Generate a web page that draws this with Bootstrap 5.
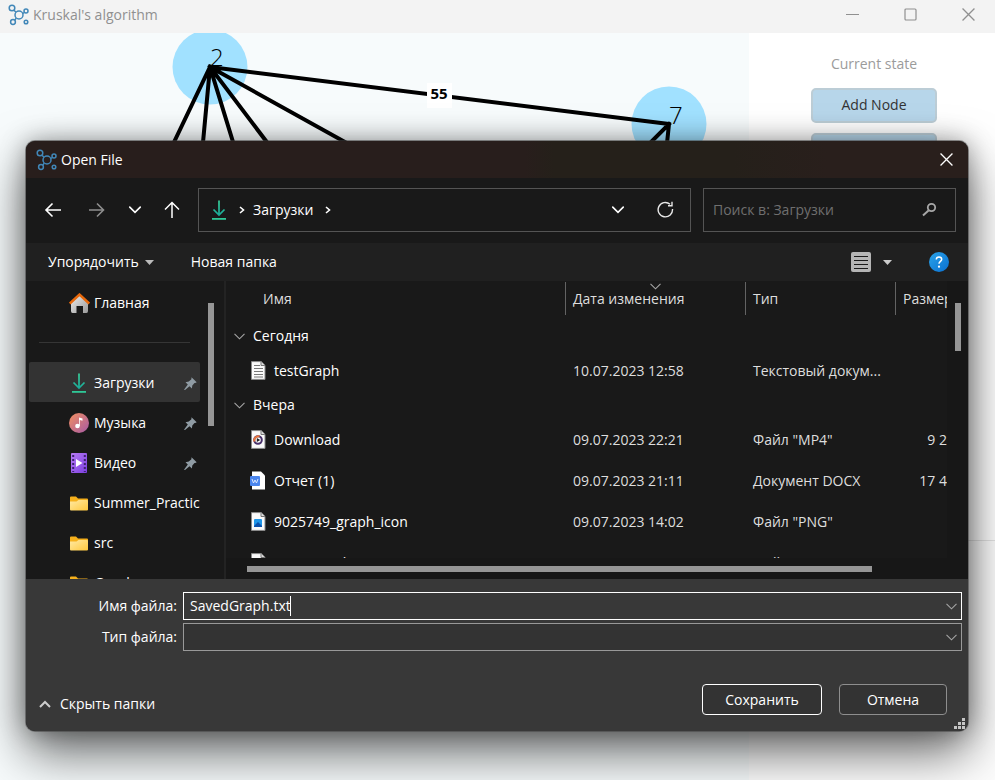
<!DOCTYPE html>
<html lang="ru">
<head>
<meta charset="utf-8">
<meta name="viewport" content="width=device-width, initial-scale=1">
<title>Kruskal's algorithm</title>
<link href="https://cdn.jsdelivr.net/npm/bootstrap@5.3.0/dist/css/bootstrap.min.css" rel="stylesheet">
<style>
  body { font-family: "Open Sans", "Noto Sans", sans-serif; font-size: 14px; line-height: 20px; background: #f7fbfc; }
  svg { display: block; flex: none; }
  button { color: inherit; }
  .plain { background: none; border: 0; padding: 0; }
  .app-bar { height: 33px; background: #f3f3f3; color: #909090; padding: 0 20px 4px 7px; }
  .win-controls { gap: 45px; }
  .board { background: #f7fbfc; }
  .side-panel { width: 246px; }
  .panel-top { flex: 0 0 508px; background: #fff; border-bottom: 1px solid #e4e4e4; padding: 21px 0 0 4px; }
  .panel-rest { background: #fdfdfd; }
  .state-label { color: #9b9b9b; margin-bottom: 14px; }
  .act { width: 126px; height: 35px; border: 2px solid #bccdd6; border-radius: 5px; background: #b7d6ea; color: #333; padding: 0 0 2px; margin-bottom: 10px; }
  .node-name { font-size: 24px; font-weight: 300; }
  .edge-cost { font-size: 15px; font-weight: 700; }

  .dialog-win { position: absolute; inset: 141px 27px 49px 26px; background: #191919; color: #fff; border-radius: 9px;
    box-shadow: 0 0 0 1px rgba(70,70,70,.55), 0 0 24px rgba(0,0,0,.34), 0 22px 50px rgba(0,0,0,.58); }
  .dialog-title { height: 37px; padding: 0 15px 0 9px; background: linear-gradient(90deg, #281e1c 53%, #25201a 56%, #25201a 75%, #291f1c 85%); border-radius: 9px 9px 0 0; }
  .nav-row { height: 65px; padding: 10px 12px 12px 18px; }
  .gap-before-wide { margin-left: 26px; }
  .gap-before { margin-left: 22px; }
  .path-box { margin-left: 18px; }
  .bar-box { border: 1px solid #545454; height: 44px; }
  .find-box { width: 253px; flex: none; padding: 0 18px 0 9px; }
  .find-box input { background: none; border: 0; outline: 0; color: #fff; padding: 0; min-width: 0; }
  .find-box input::placeholder { color: #6f6f6f; opacity: 1; }
  .tool-row { height: 38px; background: #202020; padding: 0 19px 0 22px; }
  .tool-gap { margin-left: 6px; }
  .tool-next { margin-left: 37px; }
  .content-row { min-height: 0; }
  .list-side { min-width: 0; }
  .tree { width: 171px; margin-left: 3px; padding-top: 1px; overflow: hidden; }
  .tree-item { height: 40px; flex: none; padding: 2px 3px 0 40px; border-radius: 2px; white-space: nowrap; color: #fff; text-decoration: none; }
  .tree-item.is-current { background: #333; }
  .tree-rule { height: 40px; flex: none; padding: 20px 10px 0; }
  .tree-rule hr { margin: 0; border-color: #8a8a8a; }
  .vtrack { padding-top: 22px; }
  .thumb { background: #969696; }
  .tree-track { width: 26px; padding-left: 8px; border-right: 2px solid #232323; }
  .tree-track .thumb { width: 6px; height: 123px; }
  .list-track { width: 21px; padding-left: 8px; background: #171717; }
  .list-track .thumb { width: 6px; height: 48px; }
  .htrack { height: 21px; padding: 8px 75px 0 21px; background: #171717; }
  .htrack .thumb { height: 6px; }
  .files { table-layout: fixed; width: 100%; border-collapse: collapse; }
  .files th, .files td { padding: 0; font-weight: 400; overflow: hidden; white-space: nowrap; }
  .files th { height: 41px; vertical-align: top; color: #dedede; }
  .files tbody td { height: 41px; color: #dedede; padding-left: 8px; padding-top: 1px; }
  .files tbody .file-name { color: #fff; padding-left: 24px; }
  .files tbody .group-name { height: 28px; color: #fff; padding-top: 0; }
  .head-cell { height: 33px; margin-top: 1px; padding: 7px 0 0 7px; border-left: 1px solid #636363; }
  .head-first { border: 0; padding-left: 37px; }
  .sort-mark { position: absolute; left: 84px; top: 1px; }
  .col-date { width: 180px; } .col-kind { width: 150px; } .col-size { width: 52px; }
  .dialog-foot { height: 152px; background: #383838; border-radius: 0 0 9px 9px; padding: 13px 6px 0 13px; }
  .field-label { width: 138px; text-align: right; margin-right: 6px; }
  .field { height: 28px; border: 1px solid #999; background: #333; padding: 0 4px 0 6px; }
  .field.is-active { border-color: #fff; background: #383838; }
  .field-row { margin-bottom: 3px; }
  .field input { width: 100px; border: 0; padding: 0; background: none; color: #fff; outline: 0; }
  .field select { border: 0; appearance: none; background: none; outline: 0; color: #fff; }
  .caret-bar { width: 1px; height: 20px; background: #fff; }
  .foot-actions { margin-top: 33px; padding-right: 15px; gap: 17px; }
  .foot-toggle { gap: 9px; padding-top: 8px; }
  .dlg-btn { height: 31px; border: 1px solid #8e8e8e; border-radius: 4px; background: #333; width: 108px; padding: 0; }
  .dlg-btn.primary-act { border-color: #fff; width: 120px; }
  .grip { position: absolute; right: 3px; bottom: 2px; }
</style>
<script src="https://cdn.jsdelivr.net/npm/bootstrap@5.3.0/dist/js/bootstrap.bundle.min.js"></script>
</head>
<body>
<svg width="0" height="0" class="position-absolute" aria-hidden="true">
  <defs>
    <symbol id="graph" viewBox="0 0 22 22"><g fill="none" stroke="#4187b8" stroke-width="1.500"><circle cx="12" cy="11" r="4"/><circle cx="5" cy="4" r="2.800"/><circle cx="19" cy="7" r="2"/><circle cx="6" cy="18" r="2.400"/><circle cx="19" cy="18" r="1.800"/><path d="M7 6.200l2 2M15.800 9.500l1.500-1M7.800 16l1.400-1.700"/></g></symbol>
    <symbol id="cross" viewBox="0 0 12 12"><path d="M.5.5l11 11M11.500.5l-11 11" stroke="currentColor" stroke-width="1.200"/></symbol>
    <symbol id="down" viewBox="0 0 12 8"><path d="M1.500 1.500L6 6l4.500-4.500" fill="none" stroke="currentColor" stroke-width="1.400" stroke-linecap="round"/></symbol>
    <symbol id="thin-down" viewBox="0 0 11 7"><path d="M.5.800l5 5 5-5" fill="none" stroke="#a5a5a5" stroke-width="1.100"/></symbol>
    <symbol id="step" viewBox="0 0 6 8"><path d="M1 1l3.500 3L1 7" fill="none" stroke="#fff" stroke-width="1.600"/></symbol>
    <symbol id="load" viewBox="0 0 16 20"><g fill="none" stroke="url(#teal)" stroke-width="1.700"><path d="M8 .5v14M2.500 9.500L8 15l5.500-5.500"/></g><path d="M1 18h14v1.800H1z" fill="#2fc797"/></symbol>
    <linearGradient id="teal" x1="0" y1="0" x2="0" y2="16" gradientUnits="userSpaceOnUse"><stop stop-color="#3ad29a"/><stop offset="1" stop-color="#17a99a"/></linearGradient>
    <linearGradient id="amber" x1="0" y1="0" x2="1" y2="1"><stop stop-color="#ffe9a3"/><stop offset="1" stop-color="#ffc83d"/></linearGradient>
    <linearGradient id="disc" x1="0" y1="0" x2="1" y2="1"><stop stop-color="#f39060"/><stop offset="1" stop-color="#a559a5"/></linearGradient>
    <linearGradient id="violet" x1="0" y1="0" x2="1" y2="1"><stop stop-color="#b77bf5"/><stop offset="1" stop-color="#7c3fe0"/></linearGradient>
    <linearGradient id="blue" x1="0" y1="0" x2="1" y2="1"><stop stop-color="#2aa4ea"/><stop offset="1" stop-color="#0a6fd0"/></linearGradient>
    <linearGradient id="wall" x1="0" y1="0" x2="1" y2="1"><stop stop-color="#eee"/><stop offset="1" stop-color="#999"/></linearGradient>
    <symbol id="dir" viewBox="0 0 18 15"><path d="M0 1.500Q0 .5 1 .5h5l2 2h9q1 0 1 1V7H0z" fill="#f5b01c"/><path d="M0 5.500h6.500l2-1.500H17q1 0 1 1v8.500q0 1-1 1H1q-1 0-1-1z" fill="url(#amber)"/></symbol>
    <symbol id="pin" viewBox="0 0 13 13"><path d="M7.500.3l5.200 5-1.500.8-.7-.2L8.300 8.500l-.4 3L5.500 9.200 1 13l-1-.2L3.800 7.600 1.500 5.200l3.300-.6 2.600-2.400z" fill="#8f9ba3"/></symbol>
    <symbol id="page" viewBox="0 0 16 20"><path d="M1.500.6h9.700l3.800 3.800v14H1.500z" fill="#fafafa" stroke="#8a8a8a"/><path d="M11 .8v3.700h3.800" fill="#ddd" stroke="#777"/></symbol>
  </defs>
</svg>

<div class="d-flex flex-column vh-100 overflow-hidden position-relative">
  <header class="app-bar d-flex align-items-center flex-shrink-0">
    <svg class="me-1" width="22" height="22"><use href="#graph"/></svg>
    <span>Kruskal's algorithm</span>
    <div class="win-controls d-flex align-items-center ms-auto">
      <button class="plain" aria-label="Minimize"><svg width="13" height="12"><path d="M0 5.500h13" stroke="currentColor"/></svg></button>
      <button class="plain" aria-label="Maximize"><svg width="13" height="13"><rect x="1" y="1" width="11" height="11" rx="1" fill="none" stroke="currentColor" stroke-width="1.200"/></svg></button>
      <button class="plain" aria-label="Close"><svg width="13" height="13"><use href="#cross"/></svg></button>
    </div>
  </header>
  <div class="d-flex flex-grow-1">
    <main class="board flex-grow-1">
      <svg width="100%" height="100%" role="img" aria-label="Graph">
        <circle cx="210" cy="34" r="37.500" fill="#a1e1ff"/>
        <circle cx="669" cy="91" r="37.500" fill="#a1e1ff"/>
        <g stroke="#000" stroke-width="4" stroke-linecap="square"><path d="M210 34L669 91M210 34l-67 140M210 34l-13 140M210 34l43 140M210 34l106 140M210 34l252 140M669 91l-58 58M669 91l-6 58"/></g>
        <text class="node-name" x="210" y="33">2</text>
        <text class="node-name" x="669" y="91">7</text>
        <rect x="427" y="50" width="25" height="25" fill="#fff"/>
        <text class="edge-cost" x="439" y="66" text-anchor="middle">55</text>
      </svg>
    </main>
    <aside class="side-panel d-flex flex-column flex-shrink-0">
      <div class="panel-top d-flex flex-column align-items-center">
        <div class="state-label">Current state</div>
        <button class="act">Add Node</button>
        <button class="act" aria-label="Next action"></button>
      </div>
      <div class="panel-rest flex-grow-1"></div>
    </aside>
  </div>

  <section class="dialog-win d-flex flex-column" role="dialog" aria-label="Open File">
    <div class="dialog-title d-flex align-items-center flex-shrink-0">
      <svg class="me-1" width="22" height="22"><use href="#graph"/></svg>
      <span>Open File</span>
      <button class="plain ms-auto" aria-label="Close dialog"><svg width="13" height="13"><use href="#cross"/></svg></button>
    </div>

    <div class="nav-row d-flex align-items-center flex-shrink-0">
      <button class="plain" aria-label="Back"><svg width="18" height="16" fill="none" stroke="#fff" stroke-width="1.600"><path d="M17 8H2M8.500 1.500L2 8l6.500 6.500"/></svg></button>
      <button class="plain gap-before-wide" aria-label="Forward"><svg width="18" height="16" fill="none" stroke="#8e8e8e" stroke-width="1.600"><path d="M1 8h15M9 1.500L15.500 8 9 14.500"/></svg></button>
      <button class="plain gap-before" aria-label="Recent"><svg width="14" height="10"><use href="#down"/></svg></button>
      <button class="plain gap-before" aria-label="Up"><svg width="16" height="17" fill="none" stroke="#fff" stroke-width="1.500"><path d="M8 17V2M1 8.500L8 1.500l7 7"/></svg></button>
      <div class="bar-box path-box d-flex align-items-center flex-grow-1 me-2 ps-2">
        <svg class="ms-1 me-2" width="16" height="20"><use href="#load"/></svg>
        <svg class="ms-1 me-2" width="6" height="8"><use href="#step"/></svg>
        <a href="#" class="text-reset text-decoration-none me-2">Загрузки</a>
        <svg class="ms-1" width="6" height="8"><use href="#step"/></svg>
        <button class="plain ms-auto me-4" aria-label="History"><svg class="me-2" width="14" height="10"><use href="#down"/></svg></button>
        <button class="plain me-3" aria-label="Refresh"><svg width="17" height="17" fill="none" stroke="#e8e8e8" stroke-width="1.400"><path d="M15.500 8A7.200 7.200 0 1 1 13 3.200M15 .8v4h-4"/></svg></button>
      </div>
      <div class="bar-box find-box d-flex align-items-center ms-1">
        <input class="flex-grow-1" type="text" aria-label="Поиск" placeholder="Поиск в: Загрузки">
        <svg width="15" height="15" fill="none" stroke="#a8a8a8" stroke-width="1.800"><circle cx="9.500" cy="5.500" r="3.700"/><path d="M6.500 8.500L1 13.500" stroke-width="2"/></svg>
      </div>
    </div>

    <div class="tool-row d-flex align-items-center flex-shrink-0">
      <button class="plain d-flex align-items-center">Упорядочить<svg class="tool-gap" width="9" height="5"><path d="M0 0h9L4.500 5z" fill="#bbb"/></svg></button>
      <button class="plain tool-next">Новая папка</button>
      <button class="plain d-flex align-items-center ms-auto" aria-label="View"><svg class="me-2" width="20" height="20"><rect width="20" height="20" rx="2" fill="#b5b5b5"/><path d="M3 4.500h14M3 8.500h14M3 12.500h14M3 16.500h14" stroke="#1a1a1a"/></svg><svg class="ms-1" width="9" height="5"><path d="M0 0h9L4.500 5z" fill="#ccc"/></svg></button>
      <button class="plain tool-next" aria-label="Help"><svg width="20" height="20"><circle cx="10" cy="10" r="10" fill="url(#blue)"/><path d="M7.300 7.600Q7.300 4.900 10 4.900t2.700 2.300c0 2.200-2.700 2.200-2.700 4.600" fill="none" stroke="#fff" stroke-width="1.500"/><circle cx="10" cy="14.700" r="1.100" fill="#fff"/></svg></button>
    </div>

    <div class="content-row d-flex flex-grow-1">
      <nav class="tree d-flex flex-column flex-shrink-0">
        <a href="#" class="tree-item d-flex align-items-center"><svg class="me-1" width="21" height="20"><path d="M2 9l8.500-7L19 9v9q0 2-1.500 2H14v-7H7.500v7h-4Q2 20 2 18z" fill="url(#wall)"/><path d="M.8 10.500L10.500 1.500l9.700 9" fill="none" stroke="#e8690c" stroke-width="2.400"/></svg>Главная</a>
        <div class="tree-rule"><hr></div>
        <a href="#" class="tree-item is-current d-flex align-items-center"><svg class="me-1" width="21" height="20"><use href="#load" x="2" width="16" height="20"/></svg><span>Загрузки</span><svg class="ms-auto" width="13" height="13"><use href="#pin"/></svg></a>
        <a href="#" class="tree-item d-flex align-items-center"><svg class="me-1" width="21" height="20"><circle cx="10" cy="10" r="10" fill="url(#disc)"/><circle cx="8.500" cy="13" r="2.300" fill="#fff"/><path d="M10 13V4.500l3.500 1v2.300L10.800 7v6z" fill="#fff"/></svg><span>Музыка</span><svg class="ms-auto" width="13" height="13"><use href="#pin"/></svg></a>
        <a href="#" class="tree-item d-flex align-items-center"><svg class="me-1" width="21" height="20"><rect x="2" width="16" height="20" rx="1" fill="url(#violet)"/><path d="M4.200 2v17M15.800 2v17" stroke="#3d2370" stroke-width="2" stroke-dasharray="2 2"/><path d="M7 6l6.500 4L7 14z" fill="#fff"/></svg><span>Видео</span><svg class="ms-auto" width="13" height="13"><use href="#pin"/></svg></a>
        <a href="#" class="tree-item d-flex align-items-center"><svg class="me-1" width="21" height="15"><use href="#dir" width="20" height="15"/></svg>Summer_Practice</a>
        <a href="#" class="tree-item d-flex align-items-center"><svg class="me-1" width="21" height="15"><use href="#dir" width="20" height="15"/></svg>src</a>
        <a href="#" class="tree-item d-flex align-items-center"><svg class="me-1" width="21" height="15"><use href="#dir" width="20" height="15"/></svg>Graph</a>
      </nav>
      <div class="vtrack tree-track flex-shrink-0"><div class="thumb"></div></div>
      <div class="list-side d-flex flex-column flex-grow-1">
        <div class="content-row flex-grow-1 overflow-hidden">
          <table class="files">
            <colgroup><col><col class="col-date"><col class="col-kind"><col class="col-size"></colgroup>
            <thead>
              <tr>
                <th><div class="head-cell head-first">Имя</div></th>
                <th><div class="head-cell position-relative">Дата изменения<svg class="sort-mark" width="11" height="7"><use href="#thin-down"/></svg></div></th>
                <th><div class="head-cell">Тип</div></th>
                <th><div class="head-cell">Размер</div></th>
              </tr>
            </thead>
            <tbody>
              <tr><td class="group-name" colspan="4"><div class="d-flex align-items-center"><svg class="me-2" width="11" height="7"><use href="#thin-down"/></svg>Сегодня</div></td></tr>
              <tr><td class="file-name"><div class="d-flex align-items-center"><svg class="me-2" width="16" height="20"><use href="#page"/><path d="M4 4.500h6M4 7.500h9M4 10.500h9M4 13.500h9M4 16h9" stroke="#777"/></svg>testGraph</div></td><td>10.07.2023 12:58</td><td>Текстовый докум...</td><td></td></tr>
              <tr><td class="group-name" colspan="4"><div class="d-flex align-items-center"><svg class="me-2" width="11" height="7"><use href="#thin-down"/></svg>Вчера</div></td></tr>
              <tr><td class="file-name"><div class="d-flex align-items-center"><svg class="me-2" width="16" height="20"><use href="#page"/><circle cx="8" cy="10" r="3.800" fill="#fff" stroke="#48306a" stroke-width="2"/><path d="M4.500 11.500a4 4 0 0 1 5-5" fill="none" stroke="#e8743b" stroke-width="2"/><path d="M6.800 8l3.400 2-3.400 2z" fill="#222"/></svg>Download</div></td><td>09.07.2023 22:21</td><td>Файл "MP4"</td><td class="text-end">9 2</td></tr>
              <tr><td class="file-name"><div class="d-flex align-items-center"><svg class="me-2" width="16" height="20"><path d="M2 .5h9l4 4v14H2z" fill="#fff"/><rect y="5" width="10" height="10" rx="1" fill="#4b86ee"/><path d="M2 8l1.500 4L5 9l1.500 3L8 8" fill="none" stroke="#dbe8ff"/></svg>Отчет (1)</div></td><td>09.07.2023 21:11</td><td>Документ DOCX</td><td class="text-end">17 4</td></tr>
              <tr><td class="file-name"><div class="d-flex align-items-center"><svg class="me-2" width="16" height="20"><use href="#page"/><rect x="4" y="7" width="8" height="8" rx="1" fill="#2096e8"/><path d="M4 14l4-4 4 4v1H4z" fill="#0b4faa"/></svg>9025749_graph_icon</div></td><td>09.07.2023 14:02</td><td>Файл "PNG"</td><td></td></tr>
              <tr><td class="file-name"><div class="d-flex align-items-center"><svg class="me-2" width="16" height="20"><use href="#page"/></svg>7196361_share_icon</div></td><td>09.07.2023 14:02</td><td>Файл "PNG"</td><td></td></tr>
            </tbody>
          </table>
        </div>
        <div class="htrack flex-shrink-0"><div class="thumb"></div></div>
      </div>
      <div class="vtrack list-track flex-shrink-0"><div class="thumb"></div></div>
    </div>

    <div class="dialog-foot flex-shrink-0">
      <div class="field-row d-flex align-items-center">
        <label class="field-label" for="fname">Имя файла:</label>
        <div class="field is-active d-flex align-items-center flex-grow-1"><input id="fname" type="text" value="SavedGraph.txt"><span class="caret-bar"></span><svg class="ms-auto" width="11" height="7"><use href="#thin-down"/></svg></div>
      </div>
      <div class="field-row d-flex align-items-center">
        <label class="field-label" for="ftype">Тип файла:</label>
        <div class="field d-flex align-items-center flex-grow-1"><select id="ftype" class="flex-grow-1"><option></option></select><svg width="11" height="7"><use href="#thin-down"/></svg></div>
      </div>
      <div class="foot-actions d-flex align-items-center">
        <button class="plain foot-toggle d-flex align-items-center me-auto"><svg width="12" height="8"><path d="M1 7l5-5 5 5" fill="none" stroke="#ccc" stroke-width="2"/></svg>Скрыть папки</button>
        <button class="dlg-btn primary-act">Сохранить</button>
        <button class="dlg-btn">Отмена</button>
      </div>
    </div>
    <svg class="grip" width="11" height="11" fill="#c4c4c4"><path d="M8 0h3v3H8zM4 4h3v3H4zM8 4h3v3H8zM0 8h3v3H0zM4 8h3v3H4zM8 8h3v3H8z"/></svg>
  </section>
</div>
</body>
</html>
